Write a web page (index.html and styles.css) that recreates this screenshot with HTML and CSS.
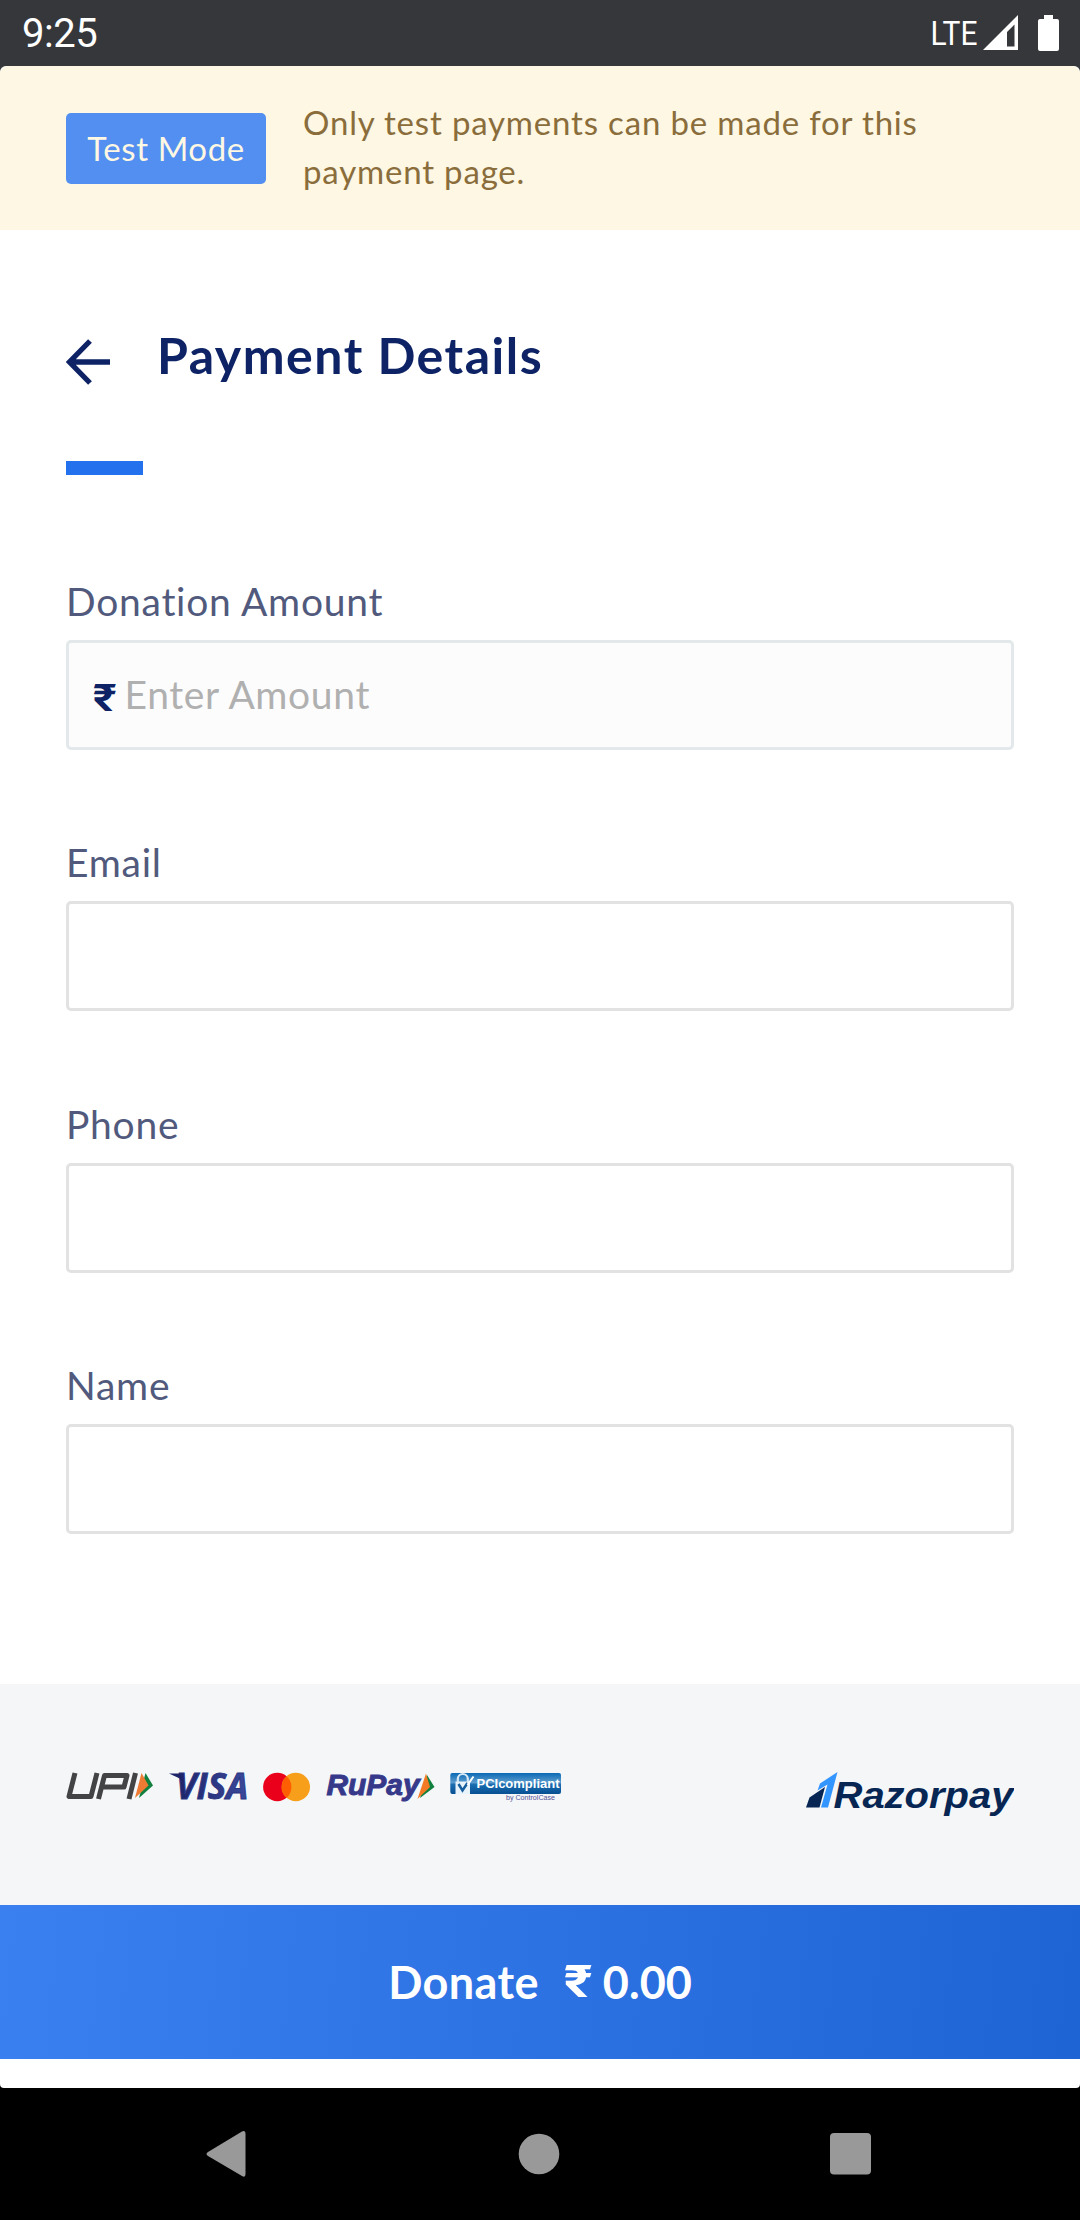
FILE: index.html
```html
<!DOCTYPE html>
<html lang="en">
<head>
<meta charset="utf-8">
<title>Payment Details</title>
<link rel="stylesheet" href="styles.css">
</head>
<body>
<div class="status-bar">
  <span class="clock">9:25</span>
  <div class="status-icons">
    <svg width="134" height="66" viewBox="0 0 134 66" fill="#fff">
      <text x="5.500" y="44.500" class="network" textLength="47" lengthAdjust="spacingAndGlyphs">LTE</text>
      <path fill-rule="evenodd" d="M58 50 L93 15 V50 Z M82 32 V46.500 H89.500 V24.500 Z"/>
      <path d="M119 15 H128 V19 H132 Q134 19 134 21 V49 Q134 51 132 51 H115 Q113 51 113 49 V21 Q113 19 115 19 H119 Z"/>
    </svg>
  </div>
</div>
<div class="view">
  <div class="page">
    <div class="notice">
      <span class="badge">Test Mode</span>
      <p class="notice-text">Only test payments can be made for this<br>payment page.</p>
    </div>
    <main class="content">
      <header class="heading">
        <svg class="back" width="45" height="46" viewBox="0 0 45 46" fill="none" stroke="#0d2366" stroke-width="5.300">
          <path d="M24 2 L3.500 23 L24 44 M4 23 H44"/>
        </svg>
        <h1>Payment Details</h1>
      </header>
      <div class="accent"></div>
      <form class="form">
        <div class="field">
          <label class="label">Donation Amount</label>
          <div class="input input-amount"><span class="rupee">₹</span><span class="placeholder">Enter Amount</span></div>
        </div>
        <div class="field"><label class="label">Email</label><div class="input"></div></div>
        <div class="field"><label class="label">Phone</label><div class="input"></div></div>
        <div class="field"><label class="label">Name</label><div class="input"></div></div>
      </form>
    </main>
    <footer class="footer">
      <svg class="schemes" width="500" height="60" viewBox="66 1757 500 60">
        <defs>
          <linearGradient id="visa" x1="0" x2="1"><stop offset="0" stop-color="#1c2368"/><stop offset="1" stop-color="#3b4a9c"/></linearGradient>
          <linearGradient id="pci" x1="0" x2="0" y1="0" y2="1"><stop offset="0" stop-color="#0a6ab4"/><stop offset=".45" stop-color="#5b9bce"/><stop offset=".55" stop-color="#1a6cb0"/><stop offset="1" stop-color="#075092"/></linearGradient>
        </defs>
        <g fill="none" stroke="#434345" stroke-width="5" stroke-linejoin="round">
          <path d="M75 1773 L69 1796.500 H91 L97 1773"/>
          <path d="M98.500 1799 L104.500 1775.500 H127 L124 1787 H103"/>
          <path d="M135.500 1773 L129 1799"/>
        </g>
        <path d="M145.500 1773 L153 1785.500 L139 1798 Z" fill="#11803f"/>
        <path d="M141.500 1773 L148.500 1785.500 L135 1798 Z" fill="#ee7a33"/>
        <text class="visa" x="176" y="1798.500" fill="url(#visa)" textLength="72" lengthAdjust="spacingAndGlyphs">VISA</text>
        <path d="M169 1773.500 H180 L183 1780 Z" fill="#1c2368"/>
        <circle cx="277.300" cy="1787" r="14.200" fill="#eb001b"/>
        <circle cx="295.800" cy="1787" r="14.200" fill="#f79e1b"/>
        <path d="M286.550 1776.300 A14.200 14.200 0 0 1 286.550 1797.700 A14.200 14.200 0 0 1 286.550 1776.300" fill="#ff5f00"/>
        <text class="rupay" x="326.500" y="1795" textLength="93" lengthAdjust="spacingAndGlyphs">RuPay</text>
        <path d="M427 1775 L434.500 1787 L420 1798 Z" fill="#11803f"/>
        <path d="M426 1773.500 L430 1787 L417.500 1799 Z" fill="#f27a24"/>
        <rect x="450.300" y="1773" width="110.700" height="21" rx="2" fill="url(#pci)"/>
        <rect x="455.500" y="1781.500" width="14.500" height="12.500" fill="#e8f3fb"/>
        <path d="M457.800 1782 V1779 A5 5 0 0 1 467.800 1779 V1782" fill="none" stroke="#d8e9f6" stroke-width="2.200"/>
        <path d="M458.500 1784 L462.500 1790.500 L467.500 1783" fill="none" stroke="#155d9c" stroke-width="2.500"/>
        <path d="M467.500 1785 L473.500 1776.500" stroke="#fff" stroke-width="2"/>
        <text class="pci" x="476.500" y="1788" textLength="83" lengthAdjust="spacingAndGlyphs">PCIcompliant</text>
        <text class="control" x="506" y="1800.300" textLength="49" lengthAdjust="spacingAndGlyphs">by ControlCase</text>
      </svg>
      <svg width="208" height="46" viewBox="806 1772 208 46">
        <path d="M806 1808.500 L809.500 1798.500 L825 1788 L819.500 1808.500 Z" fill="#072654"/>
        <path d="M837.500 1773 L828 1808.500 H821 L827.500 1785.500 L817.500 1791.500 L820 1784.500 Z" fill="#3395ff"/>
        <text class="razorpay" x="833.500" y="1808.500" textLength="180" lengthAdjust="spacingAndGlyphs">Razorpay</text>
      </svg>
    </footer>
    <button class="donate"><span class="donate-label">Donate</span><span class="donate-rupee">₹</span><span class="donate-value">0.00</span></button>
  </div>
</div>
<nav class="nav-bar">
  <svg width="41" height="48" viewBox="0 0 41 48"><path d="M2 22 L36 1.500 Q39.500 0 39.500 4 V44 Q39.500 48 36 46 L2 26 Q-1 24 2 22 Z" fill="#999"/></svg>
  <svg width="42" height="42" viewBox="0 0 42 42"><circle cx="21" cy="21" r="20.300" fill="#999"/></svg>
  <svg width="41" height="42" viewBox="0 0 41 42"><rect width="41" height="41.500" rx="4" fill="#999"/></svg>
</nav>
</body>
</html>
```
FILE: styles.css
```css
* { box-sizing: border-box; }
body { margin: 0; width: 1080px; height: 2220px; overflow: hidden; background: #fff; font-family: Lato, "Open Sans", sans-serif; }
svg { display: block; flex: none; }
.status-bar { height: 66px; background: #36373b; display: flex; justify-content: space-between; padding: 0 21.5px 0 22px; color: #fff; font-family: Roboto, sans-serif; }
.clock { font-size: 40px; line-height: 68px; letter-spacing: -0.5px; }
.network { font: 34px Roboto, sans-serif; }
.view { height: 2022px; background: linear-gradient(#36373b 0 50%, #000 50%); }
.page { height: 100%; background: #fff; border-radius: 6px 6px 4px 4px; overflow: hidden; }
.notice { height: 163.6px; background: #fdf7e3; border-radius: 8px 8px 0 0; padding: 0 66px; display: flex; align-items: center; gap: 37px; }
.badge { width: 200px; height: 71px; margin-top: 1px; border-radius: 5px; background: #528ff0; color: #fdf7e3; font-size: 33px; line-height: 70px; text-align: center; letter-spacing: 0.6px; white-space: nowrap; }
.notice-text { margin: 0; padding-bottom: 2px; color: #8a6d3b; font-size: 33px; line-height: 49.3px; white-space: nowrap; letter-spacing: 0.82px; }
.content { height: 1454.7px; padding: 91px 66px 0; }
.heading { height: 72px; display: flex; align-items: center; gap: 46px; color: #0d2366; }
.back { margin-top: 11px; }
h1 { margin: 0; padding-bottom: 3px; font-size: 50px; line-height: 69px; font-weight: 700; letter-spacing: 1.5px; white-space: nowrap; }
.accent { width: 77px; height: 14px; margin-top: 68.5px; background: #2371ec; }
.form { margin-top: 105px; display: flex; flex-direction: column; gap: 91.3px; }
.field { height: 170px; display: flex; flex-direction: column; }
.label { height: 60px; color: #515a7c; font-size: 39px; line-height: 43px; letter-spacing: 0.75px; white-space: nowrap; }
.input { height: 110px; border: 3px solid #e2e2e2; border-radius: 5px; background: #fff; }
.input-amount { border-color: #e3e8eb; background: #fcfcfc; display: flex; align-items: center; padding-left: 24px; color: #b0b0b0; font-size: 39px; letter-spacing: 0.65px; }
.placeholder { padding-bottom: 2px; }
.rupee { width: 31.5px; padding-top: 6px; color: #0d2366; font: 700 38px Roboto, sans-serif; letter-spacing: 0; transform: scaleX(1.18); transform-origin: left; }
.footer { height: 220.7px; padding: 87px 66px 0; background: #f4f6f8; display: flex; align-items: flex-start; justify-content: space-between; }
.schemes { margin-top: -14px; }
.visa { font: italic 700 35px "Open Sans", sans-serif; stroke: #2b3682; stroke-width: .9px; }
.rupay { font: italic 700 30px "Liberation Sans", sans-serif; fill: #36398a; stroke: #36398a; stroke-width: 1px; }
.pci { font: 700 13px "Liberation Sans", sans-serif; fill: #fff; }
.control { font: 7.5px "Liberation Sans", sans-serif; fill: #555596; }
.razorpay { font: italic 700 37px "Liberation Sans", sans-serif; fill: #072654; }
.donate { width: 100%; height: 154px; border: 0; padding: 0; background: linear-gradient(96deg, #3a80f0, #1e64d5); color: #fff; display: flex; align-items: center; justify-content: center; font: 700 45px Lato, sans-serif; }
.donate-label { letter-spacing: 0.4px; }
.donate-rupee { width: 27px; margin: 0 14px 0 23px; font-family: Roboto, sans-serif; transform: scaleX(1.2); transform-origin: left; }
.nav-bar { height: 132px; padding: 0 209px 0 206px; background: #000; display: flex; align-items: center; justify-content: space-between; }
```
